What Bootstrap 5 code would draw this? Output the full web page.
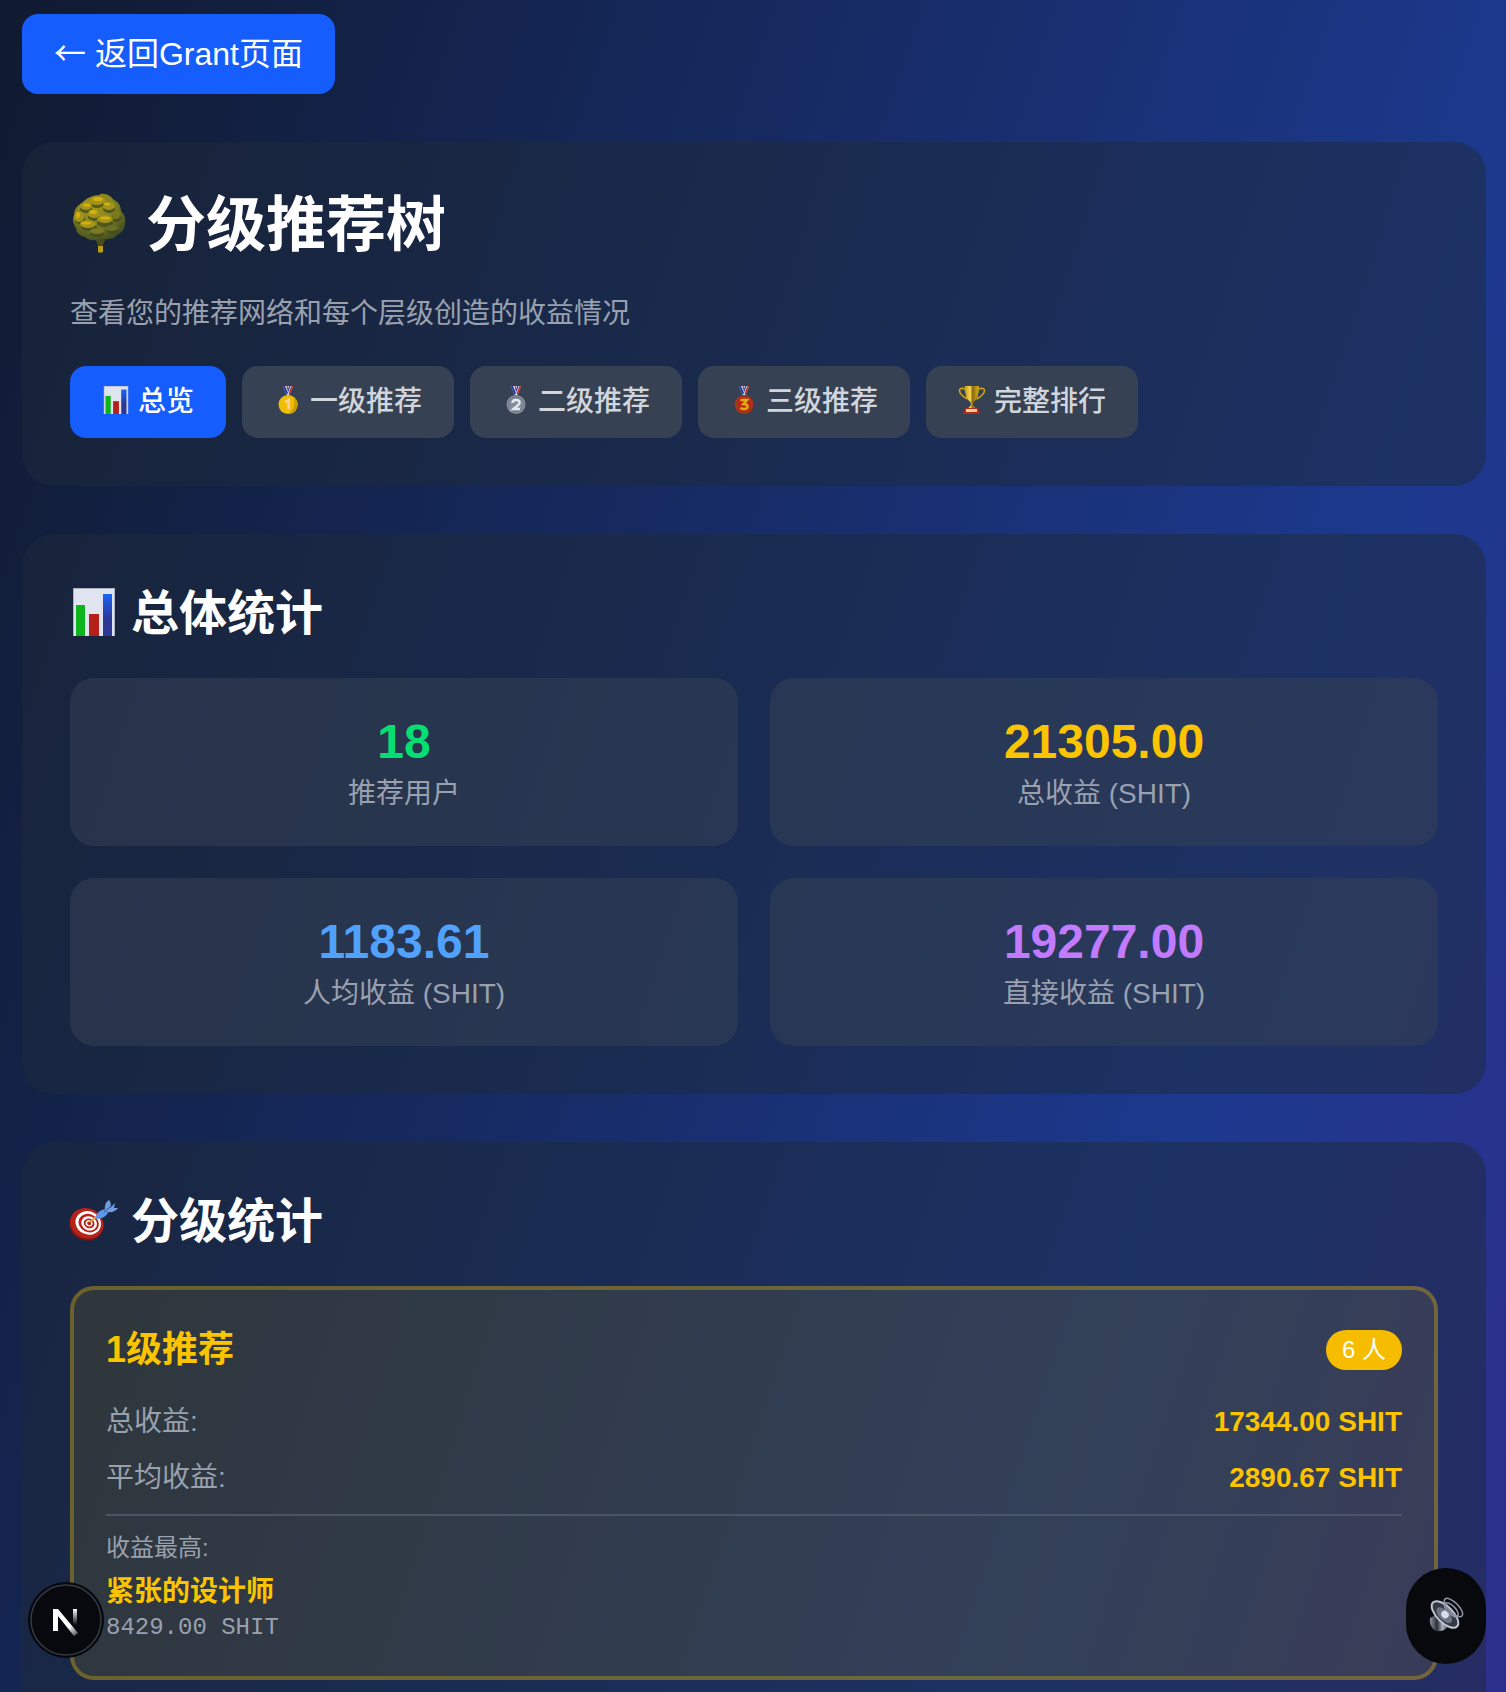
<!DOCTYPE html>
<html lang="zh-CN" class="h-100">
<head>
<meta charset="utf-8">
<meta name="viewport" content="width=device-width, initial-scale=1">
<title>分级推荐树</title>
<link href="https://cdn.jsdelivr.net/npm/bootstrap@5.3.0/dist/css/bootstrap.min.css" rel="stylesheet">
<style>
  body {
    font-family: "Liberation Sans", "Noto Sans CJK SC", sans-serif;
    font-size: 28px;
    line-height: 40px;
    color: #fff;
    background: #101828;
  }
  .page-scroll {
    padding: 14px 20px 0 22px;
    background: linear-gradient(108deg, #101a30 0%, #1c398e 76%, #2e2f8d 100%);
    scrollbar-width: none;
  }
  .page-scroll::-webkit-scrollbar { display: none; }
  .stack { gap: 48px; }
  .back-link {
    padding: 16px 32px;
    font-size: 32px;
    line-height: 48px;
    border-radius: 16px;
    background: #155dfc;
    color: #fff;
  }
  .arrow { font-family: "Noto Sans CJK SC", sans-serif; line-height: 1; }
  .panel { padding: 48px; border-radius: 32px; background: rgba(30, 41, 57, .5); }
  .panel h1, .panel h2 { font-weight: 700; }
  .panel h1 { gap: 16px; font-size: 60px; line-height: 72px; }
  .panel h2 { gap: 13px; font-size: 48px; line-height: 64px; margin-bottom: 32px; }
  .emoji { width: 1em; height: 1em; flex: none; overflow: visible; }
  .panel .emoji { margin-bottom: 4px; }
  .muted { color: #99a1af; }
  .intro { margin: 32px 0; }
  .tabs { gap: 16px; }
  .tab-btn {
    gap: 8px;
    padding: 16px 32px;
    border: 0;
    border-radius: 16px;
    font-weight: 500;
    background: #364153;
    color: #d1d5dc;
  }
  .tab-btn.active { background: #155dfc; color: #fff; }
  .stats { --bs-gutter-x: 32px; --bs-gutter-y: 32px; }
  .stat { padding: 32px; border-radius: 24px; background: rgba(54, 65, 83, .5); }
  .stat-num { font-size: 48px; line-height: 64px; }
  .c-green { color: #05df72; }
  .c-gold { color: #fac400; }
  .c-blue { color: #51a2ff; }
  .c-violet { color: #c27aff; }
  .level {
    padding: 32px;
    border: 4px solid rgba(250, 200, 0, .3);
    border-radius: 24px;
    background: rgba(250, 200, 0, .1);
  }
  .level h3 { font-size: 36px; line-height: 56px; font-weight: 700; }
  .level-head { margin-bottom: 24px; }
  .count { padding: 4px 16px; font-size: 24px; line-height: 32px; background: #f5bc00; }
  .rows { gap: 16px; }
  .best { margin-top: 16px; padding-top: 16px; border-top: 2px solid #4a5565; }
  .fine { font-size: 24px; line-height: 32px; }
  .best-name { margin-top: 8px; font-weight: 700; }
  .mono { font-family: "Liberation Mono", monospace; }
  .dev-badge { left: 28px; bottom: 34px; width: 76px; height: 76px; }
  .sound-btn { right: 20px; bottom: 28px; padding: 24px; border-radius: 40px; font-size: 32px; line-height: 48px; background: #08090d; }
</style>
</head>
<body class="h-100">
<svg width="0" height="0" class="position-absolute" aria-hidden="true">
  <defs>
    <linearGradient id="nfade" x1="0" y1="0" x2="0" y2="1"><stop offset="0" stop-color="#fff"/><stop offset="1" stop-color="#fff" stop-opacity="0"/></linearGradient>
    <linearGradient id="ndiag" x1="0" y1="0" x2="1" y2="1"><stop offset=".65" stop-color="#fff"/><stop offset="1" stop-color="#fff" stop-opacity=".2"/></linearGradient>
    <radialGradient id="leaf" cx=".4" cy=".25" r=".75"><stop offset="0" stop-color="#a8961b"/><stop offset=".5" stop-color="#85831f"/><stop offset="1" stop-color="#414e22"/></radialGradient>
    <linearGradient id="cup" x1="0" x2="1"><stop offset="0" stop-color="#c39a12"/><stop offset=".4" stop-color="#f6d555"/><stop offset=".55" stop-color="#8a6d14"/><stop offset="1" stop-color="#dcab0d"/></linearGradient>
    <linearGradient id="bluebar" x1="0" y1="0" x2="0" y2="1"><stop offset="0" stop-color="#1a63f5"/><stop offset=".6" stop-color="#2c3796"/></linearGradient>
    <linearGradient id="steel" x1="0" x2="1"><stop offset="0" stop-color="#8d95a4"/><stop offset=".4" stop-color="#2a2e36"/><stop offset=".7" stop-color="#a9b0bd"/><stop offset="1" stop-color="#4b515d"/></linearGradient>
    <symbol id="i-chart" viewBox="0 0 48 48">
      <path fill="#a9b0bf" d="M3 0h42v48H3z"/><path fill="#dfe4ef" d="M4 1h40v47H4z"/>
      <path fill="#0cb51c" d="M6 17h9v31H6z"/><path fill="#b5211a" d="M19 26h10v22H19z"/><path fill="url(#bluebar)" d="M33 6h9v42h-9z"/>
    </symbol>
    <symbol id="i-ribbon" viewBox="0 0 28 28">
      <path fill="#e6eaf3" d="M9 0h10l-3.500 9h-3z"/><path fill="#27389b" d="M9 0h2l3 7-1.500 2z"/><path fill="#b5211a" d="M12.500 0h1l1 4-.5 2z"/><path fill="#27389b" d="M15 0h1.500l-2 6-.5-2z"/><path fill="#c8241c" d="M17.500 0H19l-3.500 9-1-1.500z"/>
    </symbol>
  </defs>
</svg>

<main class="page-scroll h-100 overflow-auto">
  <div class="stack d-flex flex-column">
    <div class="d-flex"><a href="#" class="back-link text-decoration-none"><span class="arrow">←</span> 返回Grant页面</a></div>

    <section class="panel">
      <h1 class="d-flex align-items-center mb-0">
        <svg class="emoji" viewBox="0 0 60 60" aria-hidden="true">
          <path fill="#4a4a1a" d="M24 42h13l-4 9v7q-3 1.500-5 0v-7z"/><path fill="#b99c12" d="M28 52h5v6q-2.500 1-5 0z"/>
          <path fill="url(#leaf)" d="M30 0C38-1 41 3 44 6c5 2 7 7 7 11 4 4 5 9 4 13 0 6-4 9-8 11-3 4-8 5-12 4-3 3-7 3-9 1-5 1-9-1-11-3-5-1-9-4-9-9-3-4-4-9-2-13 0-6 4-10 8-12 4-5 11-8 18-8z"/>
          <g fill="#3f4a1a" opacity=".75"><ellipse cx="27" cy="10" rx="7" ry="4"/><ellipse cx="16" cy="15" rx="6" ry="4"/><ellipse cx="39" cy="15" rx="6" ry="4"/><ellipse cx="24" cy="23" rx="6" ry="4"/><ellipse cx="10" cy="26" rx="5" ry="4"/><ellipse cx="35" cy="29" rx="8" ry="4"/><ellipse cx="19" cy="33" rx="8" ry="4"/><ellipse cx="46" cy="24" rx="5" ry="4"/><ellipse cx="27" cy="40" rx="7" ry="3"/><ellipse cx="43" cy="37" rx="6" ry="3"/></g>
          <g fill="#a3951c"><ellipse cx="27" cy="7" rx="8" ry="4"/><ellipse cx="16" cy="12" rx="6" ry="4"/><ellipse cx="39" cy="12" rx="6" ry="4"/><ellipse cx="24" cy="20" rx="6" ry="4"/><ellipse cx="9" cy="23" rx="5" ry="5"/><ellipse cx="35" cy="25" rx="8" ry="4"/><ellipse cx="18" cy="30" rx="8" ry="4"/><ellipse cx="46" cy="21" rx="4" ry="4" fill="#7c7a20"/><ellipse cx="27" cy="37" rx="7" ry="3" fill="#7c7a20"/><ellipse cx="42" cy="34" rx="6" ry="3" fill="#6b6f22"/></g>
          <g fill="#d6b00b"><ellipse cx="28" cy="5" rx="5" ry="2"/><ellipse cx="17" cy="11" rx="4" ry="1.500"/><ellipse cx="37" cy="10" rx="3" ry="1.500"/><ellipse cx="23" cy="18" rx="4" ry="2"/><ellipse cx="8" cy="21" rx="2" ry="3"/><ellipse cx="35" cy="24" rx="5" ry="1.500"/><ellipse cx="16" cy="29" rx="5" ry="1.500"/></g>
        </svg>
        <span>分级推荐树</span>
      </h1>
      <p class="intro muted">查看您的推荐网络和每个层级创造的收益情况</p>
      <div class="tabs d-flex flex-wrap">
        <button type="button" class="tab-btn active d-flex align-items-center"><svg class="emoji" aria-hidden="true"><use href="#i-chart"/></svg>总览</button>
        <button type="button" class="tab-btn d-flex align-items-center"><svg class="emoji" viewBox="0 0 28 28" aria-hidden="true"><use href="#i-ribbon"/><circle cx="14" cy="18.500" r="9.500" fill="#f0bd05"/><path fill="#c99c08" d="M20 11a9.500 9.500 0 0 1-6 17q8-4 6-17z"/><path fill="none" stroke="#ffd0a0" stroke-width="2.500" d="M11 16l3.500-2v9.500"/></svg>一级推荐</button>
        <button type="button" class="tab-btn d-flex align-items-center"><svg class="emoji" viewBox="0 0 28 28" aria-hidden="true"><use href="#i-ribbon"/><circle cx="14" cy="18.500" r="9.500" fill="#858c9c"/><circle cx="14" cy="18.500" r="7.500" fill="none" stroke="#6d7484"/><path fill="none" stroke="#e3e7ee" stroke-width="2.500" d="M10.500 17q0-3 3.500-3t3.500 2.500q0 2-6 6.500h6.500"/></svg>二级推荐</button>
        <button type="button" class="tab-btn d-flex align-items-center"><svg class="emoji" viewBox="0 0 28 28" aria-hidden="true"><use href="#i-ribbon"/><circle cx="14" cy="18.500" r="9.500" fill="#b8281a"/><circle cx="14" cy="18.500" r="8" fill="none" stroke="#8a4a18"/><path fill="none" stroke="#e0ad10" stroke-width="2.500" d="M10.500 14h6.500l-3.500 4q4 0 4 2.500t-3.500 2.500q-2 0-3.500-1"/></svg>三级推荐</button>
        <button type="button" class="tab-btn d-flex align-items-center"><svg class="emoji" viewBox="0 0 28 28" aria-hidden="true"><path fill="none" stroke="#cfa010" stroke-width="1.700" d="M7 3Q1 1 1.500 5t8 8M20 3q7-2 6.500 2t-8 8"/><path fill="url(#cup)" d="M6.500 0h14.500q0 13-5.500 16l-.5 3 2.500 3h-7l2.500-3-.5-3Q7 13 6.500 0z"/><path fill="#b5281a" d="M7 22h13l2 6H5z"/><path fill="#f4d28a" d="M8 23h11v3H8z"/></svg>完整排行</button>
      </div>
    </section>

    <section class="panel">
      <h2 class="d-flex align-items-center"><svg class="emoji" aria-hidden="true"><use href="#i-chart"/></svg><span>总体统计</span></h2>
      <div class="stats row row-cols-2 text-center">
        <div class="col"><div class="stat"><div class="stat-num fw-bold c-green">18</div><div class="muted">推荐用户</div></div></div>
        <div class="col"><div class="stat"><div class="stat-num fw-bold c-gold">21305.00</div><div class="muted">总收益 (SHIT)</div></div></div>
        <div class="col"><div class="stat"><div class="stat-num fw-bold c-blue">1183.61</div><div class="muted">人均收益 (SHIT)</div></div></div>
        <div class="col"><div class="stat"><div class="stat-num fw-bold c-violet">19277.00</div><div class="muted">直接收益 (SHIT)</div></div></div>
      </div>
    </section>

    <section class="panel">
      <h2 class="d-flex align-items-center">
        <svg class="emoji" viewBox="0 -5 48 48" aria-hidden="true">
          <g transform="rotate(25 16 22)"><ellipse cx="17" cy="24" rx="17" ry="15" fill="#7c1712"/><ellipse cx="17" cy="22" rx="17" ry="15" fill="#b92219"/><ellipse cx="18" cy="21" rx="13" ry="11.500" fill="#fff"/><ellipse cx="18.500" cy="21" rx="10.500" ry="9" fill="#b92219"/><ellipse cx="19" cy="21" rx="8" ry="7" fill="#fff"/><ellipse cx="19" cy="21" rx="5.500" ry="4.800" fill="#b92219"/><ellipse cx="19" cy="21" rx="3.500" ry="3" fill="#fff"/><ellipse cx="19" cy="21" rx="2" ry="1.800" fill="#b92219"/></g>
          <path stroke="#e8a33a" stroke-width="2" d="M20 21l6-5"/><path fill="#5b97e8" d="M25 17q2-7 10-9l3 4q-4 6-12 6z"/><path fill="#6f9fe0" d="M35 9q-1-7 4-10 3 3 1 8l5-5-1 5 4 0q-3 5-11 4z"/><path stroke="#31508c" d="M34 11l10-8"/>
        </svg>
        <span>分级统计</span>
      </h2>
      <article class="level">
        <div class="level-head d-flex justify-content-between align-items-center">
          <h3 class="c-gold mb-0">1级推荐</h3>
          <span class="count rounded-pill">6 人</span>
        </div>
        <div class="rows d-flex flex-column">
          <div class="d-flex justify-content-between"><span class="muted">总收益:</span><span class="c-gold fw-bold">17344.00 SHIT</span></div>
          <div class="d-flex justify-content-between"><span class="muted">平均收益:</span><span class="c-gold fw-bold">2890.67 SHIT</span></div>
        </div>
        <div class="best">
          <div class="fine muted">收益最高:</div>
          <div class="best-name c-gold">紧张的设计师</div>
          <div class="fine mono muted">8429.00 SHIT</div>
        </div>
      </article>
    </section>
  </div>
</main>

<button type="button" class="dev-badge btn p-0 border-0 position-fixed" aria-label="Next.js">
  <svg class="d-block" width="76" height="76" viewBox="0 0 76 76" aria-hidden="true">
    <circle cx="38" cy="38" r="38" fill="#05070f"/><circle cx="38" cy="38" r="35" fill="#08090e" stroke="#363a41" stroke-width="1.500"/>
    <path fill="url(#ndiag)" d="M25 27h5l20 24-4 3-16-20v15h-5z"/><path fill="url(#nfade)" d="M45 27h4v16h-4z"/>
  </svg>
</button>
<button type="button" class="sound-btn btn border-0 position-fixed" aria-label="声音">
  <svg class="emoji d-block my-2" viewBox="0 0 32 32" aria-hidden="true">
    <path fill="url(#steel)" d="M0 18l6-3 12 12-4 3q-7 3-11-1-4-5-3-11z"/>
    <g transform="rotate(45 15 14.500)"><ellipse cx="15" cy="14.500" rx="17" ry="8" fill="#343943" stroke="#c0c6d2" stroke-width="2"/><ellipse cx="15" cy="15.500" rx="10" ry="5" fill="#6d7583"/><ellipse cx="15" cy="14.500" rx="4" ry="3.500" fill="#d7deea"/></g>
    <g fill="none" stroke="#9097a8" stroke-width="1.500" transform="rotate(45 22 9)"><ellipse cx="22" cy="7" rx="12" ry="5"/><ellipse cx="22" cy="10" rx="9" ry="4"/></g>
  </svg>
</button>
<script src="https://cdn.jsdelivr.net/npm/bootstrap@5.3.0/dist/js/bootstrap.bundle.min.js"></script>
</body>
</html>
